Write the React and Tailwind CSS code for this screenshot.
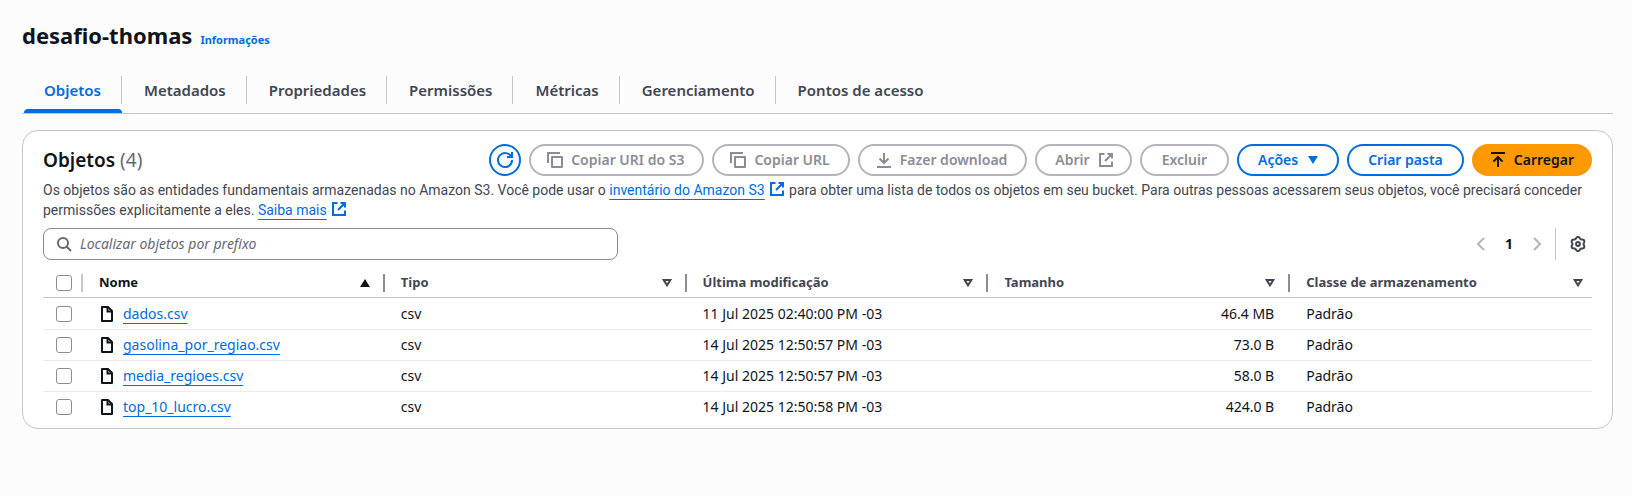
import React from "react";

const Icon = ({ children, className = "" }) => (
  <svg
    viewBox="0 0 16 16"
    aria-hidden="true"
    className={`size-4 shrink-0 fill-none stroke-current stroke-2 ${className}`}
  >
    {children}
  </svg>
);

const CopyIcon = () => (
  <Icon>
    <path d="M1 11V1h12" />
    <path d="M5 5h10v10H5z" strokeLinejoin="round" />
  </Icon>
);
const DownloadIcon = () => (
  <Icon>
    <path d="M8 1v10M3.5 6.5 8 11l4.500-4.500M1 15h14" />
  </Icon>
);
const UploadIcon = () => (
  <Icon>
    <path d="M8 15V5M3.500 9.500 8 5l4.500 4.500M1 1h14" />
  </Icon>
);
const ExternalIcon = ({ className }) => (
  <Icon className={className}>
    <path d="M9.500 2H14v4.500M7 9l7-7M14 9.500V14H2V2h4.500" />
  </Icon>
);
const RefreshIcon = () => (
  <Icon>
    <path d="M10 5h5V0M15 8a7 7 0 1 1-.7-3" />
  </Icon>
);
const FileIcon = () => (
  <Icon>
    <path d="M3 1h6l4 4v10H3z" strokeLinejoin="round" />
    <path d="M8.500 1v4.500H13" />
  </Icon>
);
const SearchIcon = () => (
  <Icon>
    <circle cx="7" cy="7" r="5" />
    <path d="m15 15-4.500-4.500" />
  </Icon>
);

// Six rounded teeth, starting at the top.
const gearOutline = Array.from({ length: 72 }, (_, i) => {
  const a = (i * Math.PI) / 36;
  const r = 6.300 + 0.8 * Math.cos(6 * a);
  return `${(8 + r * Math.sin(a)).toFixed(2)},${(8 - r * Math.cos(a)).toFixed(2)}`;
}).join(" ");

const GearIcon = () => (
  <Icon>
    <polygon points={gearOutline} strokeLinejoin="round" />
    <circle cx="8" cy="8" r="1.900" />
  </Icon>
);
const SortAsc = () => (
  <svg viewBox="0 0 10 8" className="h-2 w-2.5 shrink-0 fill-current" aria-hidden="true">
    <path d="M5 0 10 8H0z" />
  </svg>
);
const SortNone = () => (
  <svg viewBox="0 0 10 8" className="h-2 w-2.5 shrink-0 fill-none stroke-current stroke-2" aria-hidden="true">
    <path d="M1.700 1h6.600L5 6.300z" />
  </svg>
);

const tabs = ["Objetos", "Metadados", "Propriedades", "Permissões", "Métricas", "Gerenciamento", "Pontos de acesso"];

const columns = ["Nome", "Tipo", "Última modificação", "Tamanho", "Classe de armazenamento"];

const files = [
  { name: "dados.csv", date: "11 Jul 2025 02:40:00 PM -03", size: "46.4 MB" },
  { name: "gasolina_por_regiao.csv", date: "14 Jul 2025 12:50:57 PM -03", size: "73.0 B" },
  { name: "media_regioes.csv", date: "14 Jul 2025 12:50:57 PM -03", size: "58.0 B" },
  { name: "top_10_lucro.csv", date: "14 Jul 2025 12:50:58 PM -03", size: "424.0 B" },
];

const Button = ({ children, disabled, primary, className = "" }) => {
  let look = "border-[#006ce0] bg-white text-[#006ce0]";
  if (disabled) look = "border-[#b4b4bb] bg-white text-[#8c8c94]";
  if (primary) look = "border-[#ff9900] bg-[#ff9900] text-[#0f141a]";
  return (
    <button
      type="button"
      disabled={disabled}
      className={`flex h-8 items-center justify-center gap-2 rounded-full border-2 text-sm font-semibold whitespace-nowrap ${look} ${className}`}
    >
      {children}
    </button>
  );
};

const Checkbox = ({ label }) => (
  <input
    type="checkbox"
    aria-label={label}
    className="block size-4 appearance-none rounded-[3px] border border-[#8c8c94] bg-white checked:bg-[#006ce0]"
  />
);

const TextLink = ({ children }) => (
  <>
    <a href="#" className="text-[#006ce0] underline underline-offset-4">
      {children}
    </a>
    <ExternalIcon className="-mt-1 mr-px ml-1 inline text-[#006ce0]" />
  </>
);

export default function App() {
  return (
    <main className="min-h-screen bg-[#fcfcfd] pt-5 pr-[19px] pb-4 pl-[22px] font-['Noto_Sans',sans-serif] text-sm text-[#0f141a]">
      <header className="flex items-baseline gap-2">
        <h1 className="text-[22px] leading-[30px] font-bold">desafio-thomas</h1>
        <a href="#" className="text-[11px] font-bold text-[#006ce0]">
          Informações
        </a>
      </header>

      <nav className="mt-[26px] flex border-b border-[#c6c6cd]" role="tablist">
        {tabs.map((tab, i) => (
          <button
            key={tab}
            type="button"
            role="tab"
            aria-selected={i === 0}
            className={`group ml-0.5 flex flex-col text-[15px] leading-7 font-semibold ${i === 0 ? "text-[#006ce0]" : "text-[#424650]"}`}
          >
            <span className="border-r border-[#c6c6cd] px-5 group-last:border-transparent">{tab}</span>
            <span className={`mt-[5px] h-1 w-full rounded-t-sm ${i === 0 ? "bg-[#006ce0]" : ""}`} />
          </button>
        ))}
      </nav>

      <section className="mt-4 rounded-2xl border border-[#c6c6cd] bg-white px-5 pt-[13px] pb-[5px]">
        <div className="flex items-center justify-between">
          <h2 className="text-[19px] leading-7 font-semibold">
            Objetos <span className="font-normal text-[#656871]">(4)</span>
          </h2>
          <div className="flex gap-2">
            <button
              type="button"
              aria-label="Atualizar"
              className="flex size-8 items-center justify-center rounded-full border-2 border-[#006ce0] text-[#006ce0]"
            >
              <RefreshIcon />
            </button>
            <Button disabled className="pr-[18px] pl-4">
              <CopyIcon />
              Copiar URI do S3
            </Button>
            <Button disabled className="pr-[18px] pl-4">
              <CopyIcon />
              Copiar URL
            </Button>
            <Button disabled className="pr-[18px] pl-4">
              <DownloadIcon />
              Fazer download
            </Button>
            <Button disabled className="pr-4 pl-[18px]">
              Abrir
              <ExternalIcon />
            </Button>
            <Button disabled className="px-5">
              Excluir
            </Button>
            <Button className="px-[19px]">
              Ações
              <svg viewBox="0 0 10 8" className="ml-0.5 h-2 w-2.5 fill-current" aria-hidden="true">
                <path d="M0 0h10L5 8z" />
              </svg>
            </Button>
            <Button className="px-[19px]">Criar pasta</Button>
            <Button primary className="px-4">
              <UploadIcon />
              Carregar
            </Button>
          </div>
        </div>

        <p className="mt-1 font-[Roboto,sans-serif] text-sm leading-5 text-[#424650]">
          Os objetos são as entidades fundamentais armazenadas no Amazon S3. Você pode usar o{" "}
          <TextLink>inventário do Amazon S3</TextLink> para obter uma lista de todos os objetos em seu bucket. Para
          outras pessoas acessarem seus objetos, você precisará conceder permissões explicitamente a eles.{" "}
          <TextLink>Saiba mais</TextLink>
        </p>

        <div className="mt-2 flex items-center justify-between">
          <label className="flex h-8 w-full max-w-[575px] items-center gap-2 rounded-lg border border-[#8c8c94] px-3 text-[#656871]">
            <SearchIcon />
            <input
              type="search"
              aria-label="Localizar objetos por prefixo"
              placeholder="Localizar objetos por prefixo"
              className="w-full bg-transparent outline-none placeholder:text-[#656871] placeholder:italic"
            />
          </label>
          <div className="flex h-8 items-center pr-1.5">
            <button type="button" aria-label="Página anterior" className="text-[#b4b4bb]">
              <Icon>
                <path d="m11 2-6 6 6 6" />
              </Icon>
            </button>
            <button type="button" className="w-10 text-center font-bold">
              1
            </button>
            <button type="button" aria-label="Próxima página" className="text-[#b4b4bb]">
              <Icon>
                <path d="m5 2 6 6-6 6" />
              </Icon>
            </button>
            <span className="ml-2.5 h-8 border-l border-[#c6c6cd]" />
            <button type="button" aria-label="Preferências" className="ml-3.5 text-[#424650]">
              <GearIcon />
            </button>
          </div>
        </div>

        <table className="mt-2 w-full table-fixed border-separate border-spacing-0 text-left">
          <colgroup>
            <col className="w-10" />
            <col />
            <col />
            <col />
            <col />
            <col />
          </colgroup>
          <thead>
            <tr className="h-[30px]">
              <th className="border-b border-[#c6c6cd] p-0">
                <div className="flex h-[18px] items-center border-r-2 border-[#c6c6cd] pl-[13px]">
                  <Checkbox label="Selecionar todos" />
                </div>
              </th>
              {columns.map((label, i) => (
                <th key={label} className="group border-b border-[#c6c6cd] p-0" aria-sort={i === 0 ? "ascending" : "none"}>
                  <div
                    className={`flex h-[18px] items-center justify-between border-r-2 border-[#8c8c94] pr-[13px] pl-4 text-[13px] font-bold group-last:border-transparent group-last:pr-[7px] ${i === 0 ? "text-[#0f141a]" : "text-[#424650]"}`}
                  >
                    {label}
                    {i === 0 ? <SortAsc /> : <SortNone />}
                  </div>
                </th>
              ))}
            </tr>
          </thead>
          <tbody>
            {files.map((f) => (
              <tr
                key={f.name}
                className="h-[31px] leading-5 first:h-8 [&>td]:border-b [&>td]:border-[#ebebf0] [&>td]:px-4 [&>td]:py-0 last:[&>td]:border-transparent"
              >
                <td>
                  <div className="-ml-[3px]">
                    <Checkbox label={`Selecionar ${f.name}`} />
                  </div>
                </td>
                <td>
                  <div className="flex items-center gap-2">
                    <FileIcon />
                    <a href="#" className="text-[#006ce0] underline underline-offset-4">
                      {f.name}
                    </a>
                  </div>
                </td>
                <td>csv</td>
                <td>{f.date}</td>
                <td className="text-right">{f.size}</td>
                <td>Padrão</td>
              </tr>
            ))}
          </tbody>
        </table>
      </section>
    </main>
  );
}
